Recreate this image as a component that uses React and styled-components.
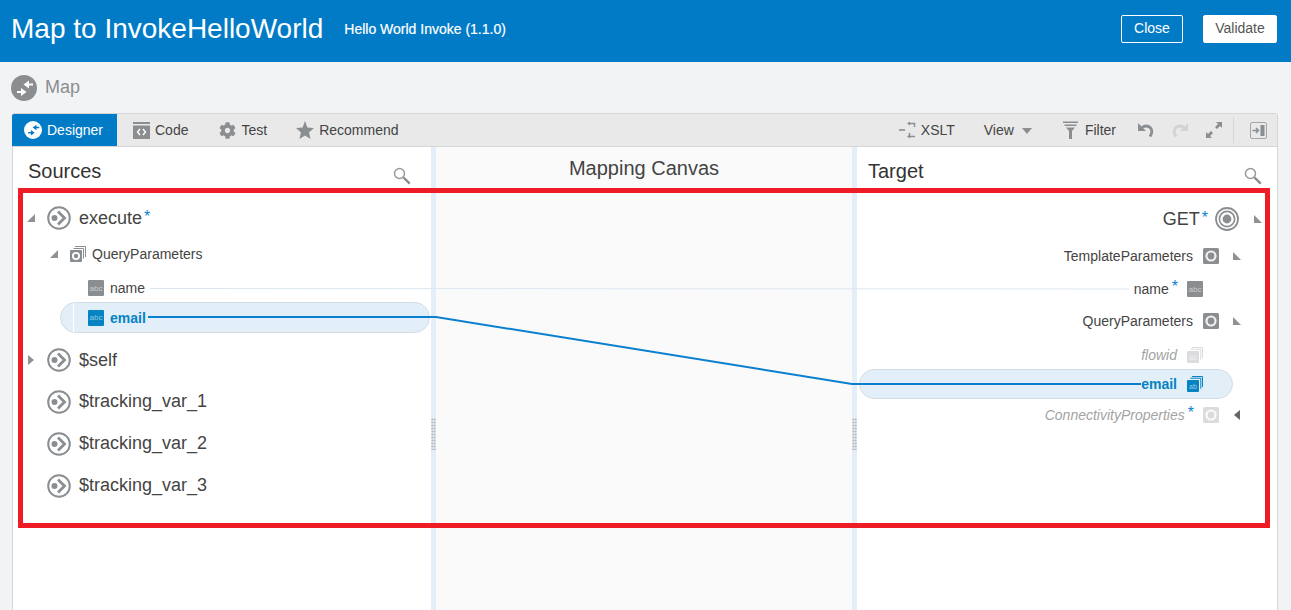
import React from "react";
import styled, { createGlobalStyle } from "styled-components";
import { FaCog } from "react-icons/fa";

const GRAY = "#8b8e91";

const MapGlyph = ({ size, bg, fg }) => (
  <svg width={size} height={size} viewBox="0 0 26 26">
    <circle cx="13" cy="13" r="13" fill={bg} />
    <path d="M22 9.5h-5M6 17h5" fill="none" stroke={fg} strokeWidth="2.2" />
    <path d="M18 5.5l-5.5 4 5.5 4zM10 13l5.5 4-5.5 4z" fill={fg} />
  </svg>
);

const SourceIcon = () => (
  <svg width="24" height="24" viewBox="0 0 24 24">
    <circle cx="12" cy="12" r="10.8" fill="none" stroke={GRAY} strokeWidth="2" />
    <circle cx="7.5" cy="12" r="3" fill={GRAY} />
    <path d="M11 5.5l6.5 6.5-6.5 6.5" fill="none" stroke={GRAY} strokeWidth="2.8" />
  </svg>
);

const TargetIcon = () => (
  <svg width="24" height="24" viewBox="0 0 24 24">
    <circle cx="12" cy="12" r="11" fill="none" stroke={GRAY} strokeWidth="1.8" />
    <circle cx="12" cy="12" r="7.6" fill="none" stroke={GRAY} strokeWidth="1.6" />
    <circle cx="12" cy="12" r="4.4" fill={GRAY} />
  </svg>
);

const StackIcon = () => (
  <svg width="16" height="16" viewBox="0 0 16 16">
    <path d="M5 .5h10.5V11M3.5 2.5h10v10" fill="none" stroke={GRAY} />
    <rect y="4" width="12" height="12" rx="1" fill={GRAY} />
    <circle cx="6" cy="10" r="4" fill="#fff" />
    <circle cx="6" cy="10" r="2.2" fill={GRAY} />
  </svg>
);

const GroupIcon = ({ $faded }) => (
  <svg width="16" height="16" viewBox="0 0 16 16" opacity={$faded ? 0.3 : 1}>
    <rect width="16" height="16" rx="1.5" fill={GRAY} />
    <circle cx="8" cy="8" r="5.6" fill="#f0f0f0" />
    <circle cx="8" cy="8" r="3.4" fill={GRAY} />
  </svg>
);

const RepeatIcon = ({ color, $faded }) => (
  <svg width="16" height="16" viewBox="0 0 16 16" opacity={$faded ? 0.3 : 1}>
    <path d="M5 .5h10.5V11M3.2 2.2h10.6v10.6" fill="none" stroke={color} />
    <rect y="4" width="12" height="12" rx="1" fill={color} />
    <text x="6" y="13" textAnchor="middle" fontSize="7" fill="#fff" fillOpacity="0.6" fontFamily="Liberation Sans, sans-serif">ab</text>
  </svg>
);

const Caret = ({ dir, color = "#8f9295" }) => {
  const shapes = {
    down: "M9 1v8H1z",
    corner: "M1 1l8 8H1z",
    right: "M2 0l6 5-6 5z",
    left: "M8 0L2 5l6 5z",
  };
  return (
    <svg width="10" height="10" viewBox="0 0 10 10">
      <path d={shapes[dir]} fill={color} />
    </svg>
  );
};

const SearchIcon = () => (
  <svg width="18" height="18" viewBox="0 0 18 18">
    <circle cx="6.5" cy="6.5" r="5" fill="none" stroke="#9a9a9a" strokeWidth="1.5" />
    <path d="M10.5 10.5l6.2 6.2" stroke="#8a8a8a" strokeWidth="2.4" />
  </svg>
);

const CodeIcon = () => (
  <svg width="17" height="17" viewBox="0 0 17 17">
    <rect width="17" height="2" fill={GRAY} />
    <rect y="3.5" width="17" height="13.5" fill={GRAY} />
    <path d="M7 7l-2.5 3L7 13M10 7l2.5 3L10 13" fill="none" stroke="#fff" strokeWidth="1.4" />
  </svg>
);

const StarIcon = () => (
  <svg width="18" height="18" viewBox="0 0 18 18">
    <path d="M9 0l2.4 6.4L18 7l-5 4.4L14.6 18 9 14.4 3.4 18 5 11.4 0 7l6.6-.6z" fill={GRAY} />
  </svg>
);

const XsltIcon = () => (
  <svg width="17" height="18" viewBox="0 0 17 18">
    <path d="M0 9h6" stroke={GRAY} strokeWidth="1.6" />
    <path d="M10 2.5h5.5v3.5M16 15.5h-5.5V12" fill="none" stroke={GRAY} strokeWidth="1.5" />
    <path d="M11 .5v4l-3-2zM11 13.5v4l-3-2z" fill={GRAY} />
  </svg>
);

const FilterIcon = () => (
  <svg width="15" height="18" viewBox="0 0 15 18">
    <path d="M0 .5h15v1.5H0zM1.5 3.5h12V5h-12zM3 6.5h9L9 10v8H6v-8z" fill={GRAY} />
  </svg>
);

const UndoIcon = ({ color, $flip }) => (
  <svg width="18" height="18" viewBox="0 0 18 18" style={$flip ? { transform: "scaleX(-1)" } : undefined}>
    <path d="M1 2v8h8z" fill={color} />
    <path d="M5 6.5c2-1.5 5-2 7.5-.5 3 2 3 6 .5 9.5" fill="none" stroke={color} strokeWidth="2.8" />
  </svg>
);

const ExpandIcon = () => (
  <svg width="18" height="18" viewBox="0 0 18 18">
    <path d="M11 1h6v6l-2-2-3 3-2-2 3-3zM7 17H1v-6l2 2 3-3 2 2-3 3z" fill={GRAY} />
  </svg>
);

const DockIcon = () => (
  <svg width="17" height="17" viewBox="0 0 17 17">
    <rect x=".5" y=".5" width="16" height="16" rx="1.5" fill="none" stroke="#a5a5a5" />
    <rect x="10.5" y="3" width="4" height="11" fill={GRAY} />
    <path d="M2.5 8.5h5M6 6l2.5 2.5L6 11" fill="none" stroke={GRAY} strokeWidth="1.5" />
  </svg>
);

const sources = [
  { name: "$tracking_var_1" },
  { name: "$tracking_var_2" },
  { name: "$tracking_var_3" },
];

export default function App() {
  return (
    <Page>
      <GlobalStyle />
      <Header>
        <Title>Map to InvokeHelloWorld</Title>
        <Subtitle>Hello World Invoke (1.1.0)</Subtitle>
        <HeaderActions>
          <OutlineButton>Close</OutlineButton>
          <SolidButton>Validate</SolidButton>
        </HeaderActions>
      </Header>
      <Crumb>
        <MapGlyph size={26} bg={GRAY} fg="#fff" />
        <span>Map</span>
      </Crumb>
      <Panel>
        <Toolbar>
          <ActiveTab>
            <MapGlyph size={18} bg="#fff" fg="#027bc7" />
            Designer
          </ActiveTab>
          <ToolItem $left={16}><CodeIcon />Code</ToolItem>
          <ToolItem $left={31}><GearWrap><FaCog size={17} /></GearWrap>Test</ToolItem>
          <ToolItem $left={29}><StarIcon />Recommend</ToolItem>
          <ToolSpacer />
          <ToolItem><XsltIcon />XSLT</ToolItem>
          <ToolItem $left={29}>View<CaretDown /></ToolItem>
          <ToolItem $left={31} $gap={7}><FilterIcon />Filter</ToolItem>
          <IconGroup>
            <UndoIcon color={GRAY} />
            <UndoIcon color="#d2d3d4" $flip />
            <ExpandIcon />
            <Divider />
            <DockIcon />
          </IconGroup>
        </Toolbar>
        <Body>
          <Column>
            <ColumnHead>
              <ColumnTitle>Sources</ColumnTitle>
              <SearchSlot><SearchIcon /></SearchSlot>
            </ColumnHead>
            <Tree>
              <Row $h={40} $pad={13}>
                <CaretSlot $w={21}><Caret dir="down" /></CaretSlot>
                <SourceIcon />
                <RootLabel>execute<Star>*</Star></RootLabel>
              </Row>
              <Row $h={32} $pad={36}>
                <CaretSlot $w={21}><Caret dir="down" /></CaretSlot>
                <StackIcon />
                <Label>QueryParameters</Label>
              </Row>
              <Row $h={32} $top={4} $pad={75}>
                <TypeBadge>abc</TypeBadge>
                <Label>name</Label>
              </Row>
              <LeftPill>
                <TypeBadge $active>abc</TypeBadge>
                <Label $active>email</Label>
              </LeftPill>
              <Row $h={41} $top={1} $pad={13}>
                <CaretSlot $w={21}><Caret dir="right" /></CaretSlot>
                <SourceIcon />
                <RootLabel>$self</RootLabel>
              </Row>
              {sources.map((item) => (
                <Row key={item.name} $h={42} $top={1} $pad={34}>
                  <SourceIcon />
                  <RootLabel>{item.name}</RootLabel>
                </Row>
              ))}
            </Tree>
          </Column>
          <Splitter><Grip /></Splitter>
          <Canvas>
            <CanvasTitle>Mapping Canvas</CanvasTitle>
          </Canvas>
          <Splitter><Grip /></Splitter>
          <Column>
            <ColumnHead $target>
              <ColumnTitle>Target</ColumnTitle>
              <SearchSlot><SearchIcon /></SearchSlot>
            </ColumnHead>
            <Tree>
              <Row $h={42} $right={14} $end>
                <RootLabel $flush>GET<Star>*</Star></RootLabel>
                <IconGap $w={7} />
                <TargetIcon />
                <CaretSlot $w={24} $end><Caret dir="corner" /></CaretSlot>
              </Row>
              <Row $h={32} $right={35} $end>
                <Label>TemplateParameters</Label>
                <IconGap $w={10} />
                <GroupIcon />
                <CaretSlot $w={23} $end><Caret dir="corner" /></CaretSlot>
              </Row>
              <Row $h={34} $right={74} $end>
                <Label>name<Star $small>*</Star></Label>
                <IconGap $w={9} />
                <TypeBadge>abc</TypeBadge>
              </Row>
              <Row $h={30} $right={35} $end>
                <Label>QueryParameters</Label>
                <IconGap $w={10} />
                <GroupIcon />
                <CaretSlot $w={23} $end><Caret dir="corner" /></CaretSlot>
              </Row>
              <Row $h={33} $top={4} $right={74} $end>
                <Label $faded>flowid</Label>
                <IconGap $w={10} />
                <RepeatIcon color={GRAY} $faded />
              </Row>
              <RightPill>
                <Label $active>email</Label>
                <IconGap $w={10} />
                <RepeatIcon color="#0583c2" />
              </RightPill>
              <Row $h={32} $right={35} $end>
                <Label $faded>ConnectivityProperties<Star $small>*</Star></Label>
                <IconGap $w={9} />
                <GroupIcon $faded />
                <CaretSlot $w={23} $end><Caret dir="left" color="#666" /></CaretSlot>
              </Row>
            </Tree>
          </Column>
          <Wires viewBox="0 0 1264 463" width="1264" height="463">
            <path d="M137 141.5L1116 142" stroke="#dde6ee" fill="none" />
            <path d="M135 170H423L839 237H1128" stroke="#0a7fd0" strokeWidth="2" fill="none" />
          </Wires>
        </Body>
      </Panel>
      <Highlight />
    </Page>
  );
}

const GlobalStyle = createGlobalStyle`
  html, body {
    margin: 0;
    padding: 0;
    background: #f2f3f5;
  }
  * {
    box-sizing: border-box;
  }
`;

const Page = styled.div`
  position: relative;
  display: flex;
  flex-direction: column;
  height: 610px;
  overflow: hidden;
  font-family: "Liberation Sans", Arial, sans-serif;
  color: #333;
`;

const Header = styled.header`
  display: flex;
  align-items: center;
  flex: 0 0 62px;
  padding: 0 14px 4px 11px;
  background: #027bc7;
  color: #fff;
`;

const Title = styled.div`
  font-size: 28px;
  line-height: 34px;
`;

const Subtitle = styled.div`
  margin-left: 21px;
  font-size: 14px;
  -webkit-text-stroke: 0.2px #fff;
`;

const HeaderActions = styled.div`
  display: flex;
  gap: 20px;
  margin-left: auto;
`;

const OutlineButton = styled.div`
  display: flex;
  align-items: center;
  justify-content: center;
  width: 62px;
  height: 28px;
  padding-bottom: 2px;
  border: 1px solid #fff;
  border-radius: 2px;
  font-size: 14px;
  color: #fff;
`;

const SolidButton = styled(OutlineButton)`
  width: 74px;
  background: #fff;
  color: #555;
`;

const Crumb = styled.div`
  display: flex;
  align-items: center;
  gap: 8px;
  flex: 0 0 51px;
  padding-left: 11px;
  font-size: 18px;
  color: #8b8e91;
`;

const Panel = styled.section`
  display: flex;
  flex-direction: column;
  flex: 1;
  margin: 0 13px 0 12px;
  background: #fff;
  border: 1px solid #d5d6d8;
  border-bottom: 0;
  border-radius: 3px 3px 0 0;
`;

const Toolbar = styled.div`
  display: flex;
  align-items: center;
  flex: 0 0 33px;
  margin-left: -1px;
  padding: 0 10px 0 0;
  background: #e9e9ea;
  border-bottom: 1px solid #d5d6d8;
  font-size: 14px;
  color: #444;
`;

const ActiveTab = styled.div`
  display: flex;
  align-items: center;
  gap: 5px;
  align-self: stretch;
  width: 105px;
  padding-left: 12px;
  background: #027bc7;
  border-radius: 2px 0 0 0;
  color: #fff;
`;

const ToolItem = styled.div`
  display: flex;
  align-items: center;
  gap: ${(p) => p.$gap || 5}px;
  margin-left: ${(p) => p.$left || 0}px;
`;

const GearWrap = styled.span`
  display: flex;
  color: #8b8e91;
`;

const ToolSpacer = styled.div`
  flex: 1;
`;

const CaretDown = styled.span`
  width: 0;
  height: 0;
  margin-left: 3px;
  margin-top: 2px;
  border-left: 5px solid transparent;
  border-right: 5px solid transparent;
  border-top: 6px solid #8b8e91;
`;

const IconGroup = styled.div`
  display: flex;
  align-items: center;
  gap: 16px;
  margin-left: 21px;
`;

const Divider = styled.div`
  width: 1px;
  height: 26px;
  margin-left: -6px;
  background: #d5d6d8;
`;

const Body = styled.div`
  position: relative;
  display: grid;
  grid-template-columns: 418px 5px 416px 5px 1fr;
  flex: 1;
  min-height: 0;
`;

const Column = styled.div`
  display: flex;
  flex-direction: column;
`;

const ColumnHead = styled.div`
  display: flex;
  align-items: center;
  justify-content: space-between;
  flex: 0 0 41px;
  padding: 8px ${(p) => (p.$target ? 15 : 20)}px 0 ${(p) => (p.$target ? 11 : 15)}px;
`;

const ColumnTitle = styled.div`
  font-size: 20px;
  color: #333;
`;

const SearchSlot = styled.span`
  display: flex;
  margin-top: 8px;
`;

const Tree = styled.div`
  display: flex;
  flex-direction: column;
  padding-top: 10px;
`;

const Row = styled.div`
  display: flex;
  align-items: center;
  justify-content: ${(p) => (p.$end ? "flex-end" : "flex-start")};
  height: ${(p) => p.$h}px;
  padding-top: ${(p) => p.$top || 0}px;
  padding-left: ${(p) => p.$pad || 0}px;
  padding-right: ${(p) => p.$right || 0}px;
`;

const CaretSlot = styled.span`
  display: flex;
  justify-content: ${(p) => (p.$end ? "flex-end" : "flex-start")};
  width: ${(p) => p.$w}px;
`;

const IconGap = styled.span`
  width: ${(p) => p.$w}px;
`;

const RootLabel = styled.span`
  margin-left: ${(p) => (p.$flush ? 0 : 8)}px;
  font-size: 18px;
  color: #444;
`;

const Label = styled.span`
  margin-left: 6px;
  font-size: 14px;
  font-weight: ${(p) => (p.$active ? 700 : 400)};
  font-style: ${(p) => (p.$faded ? "italic" : "normal")};
  color: ${(p) => (p.$active ? "#0583c2" : p.$faded ? "#a3a3a3" : "#444")};
`;

const Star = styled.sup`
  margin-left: ${(p) => (p.$small ? 3 : 2)}px;
  font-size: 16px;
  font-weight: 400;
  font-style: normal;
  line-height: 0;
  vertical-align: 2px;
  color: #0a84d6;
`;

const TypeBadge = styled.span`
  display: flex;
  align-items: center;
  justify-content: center;
  width: 16px;
  height: 16px;
  border-radius: 1px;
  background: ${(p) => (p.$active ? "#0583c2" : "#8b8e91")};
  font-size: 8px;
  color: rgba(255, 255, 255, 0.55);
`;

const Pill = styled.div`
  display: flex;
  align-items: center;
  background: #e2eef8;
  border: 1px solid #d5dde4;
  border-radius: 16px;
`;

const LeftPill = styled(Pill)`
  position: relative;
  height: 31px;
  margin: 0 1px 6px 47px;
  padding-left: 27px;
  &::before {
    content: "";
    position: absolute;
    left: 12px;
    top: 0;
    bottom: 0;
    width: 1px;
    background: #fff;
  }
`;

const RightPill = styled(Pill)`
  justify-content: flex-end;
  height: 30px;
  margin: 0 44px 0 2px;
  padding-right: 29px;
`;

const Splitter = styled.div`
  display: flex;
  align-items: center;
  justify-content: center;
  background: #e3eef8;
`;

const Grip = styled.div`
  width: 5px;
  height: 32px;
  margin-top: 111px;
  background-image: radial-gradient(#c2c6ca 1px, transparent 1px);
  background-size: 2.5px 3px;
`;

const Canvas = styled.div`
  background: #fafafa;
`;

const CanvasTitle = styled.div`
  padding-top: 10px;
  text-align: center;
  font-size: 20px;
  color: #444;
`;

const Wires = styled.svg`
  position: absolute;
  left: 0;
  top: 0;
  pointer-events: none;
`;

const Highlight = styled.div`
  position: absolute;
  left: 18px;
  top: 188px;
  width: 1252px;
  height: 340px;
  border: 5px solid #ee1c25;
  pointer-events: none;
`;
